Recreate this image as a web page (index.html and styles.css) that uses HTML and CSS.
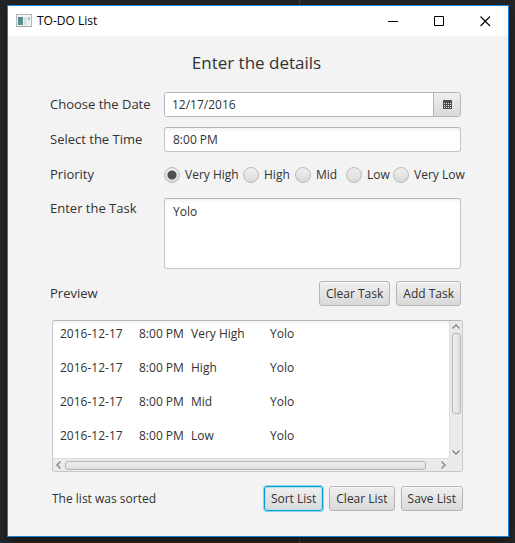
FILE: index.html
```html
<!DOCTYPE html>
<html lang="en">
<head>
<meta charset="utf-8">
<title>TO-DO List</title>
<link rel="stylesheet" href="styles.css">
</head>
<body>
<div class="window">
  <header class="titlebar">
    <svg class="app-icon" width="16" height="14" viewBox="0 0 16 14" aria-hidden="true">
      <defs>
        <linearGradient id="pane" x1="0" y1="0" x2="1" y2="1">
          <stop offset="0" stop-color="#5279a8"/><stop offset="1" stop-color="#54a468"/>
        </linearGradient>
      </defs>
      <rect x=".5" y=".5" width="15" height="12" fill="#f4f4f4" stroke="#b4b8bd"/>
      <path d="M0 12.5h16" stroke="#a2a6aa"/>
      <rect x="2" y="3" width="5" height="8" fill="url(#pane)"/>
      <rect x="8" y="3" width="3" height="8" fill="#dcdfe2"/>
      <rect x="12" y="3" width="2" height="3" fill="#9cc6bd"/>
      <rect x="12" y="6" width="2" height="5" fill="#e8e8ea"/>
    </svg>
    <span class="caption">TO-DO List</span>
    <button class="win-btn" aria-label="Minimize"><svg width="11" height="11"><path d="M0 5.500h10" stroke="#000"/></svg></button>
    <button class="win-btn" aria-label="Maximize"><svg width="11" height="11"><path d="M.5.500h9v9h-9z" fill="none" stroke="#000"/></svg></button>
    <button class="win-btn" aria-label="Close"><svg width="11" height="11"><path d="M.5.500l9.500 9.500M10 .5L.5 10" stroke="#000" stroke-width="1.100"/></svg></button>
  </header>

  <main class="content">
    <h1 class="heading">Enter the details</h1>

    <form class="form">
      <label class="label" for="date">Choose the Date</label>
      <div class="date-picker">
        <input class="field" id="date" type="text" value="12/17/2016">
        <button class="date-btn" type="button" aria-label="Open calendar">
          <svg width="9" height="9" viewBox="0 0 9 9" shape-rendering="crispEdges">
            <path fill="#4d4d4d" d="M0 0h9v9H0z"/>
            <path stroke="#e8e8e8" stroke-dasharray="1 1" d="M1 3.500h7M1 5.500h7M1 7.500h7"/>
          </svg>
        </button>
      </div>

      <label class="label" for="time">Select the Time</label>
      <input class="field" id="time" type="text" value="8:00 PM">

      <span class="label" id="priority">Priority</span>
      <div class="radios" role="radiogroup" aria-labelledby="priority">
        <label class="radio"><input type="radio" name="priority" checked>Very High</label>
        <label class="radio"><input type="radio" name="priority">High</label>
        <label class="radio"><input type="radio" name="priority">Mid</label>
        <label class="radio"><input type="radio" name="priority">Low</label>
        <label class="radio"><input type="radio" name="priority">Very Low</label>
      </div>

      <label class="label label-top" for="task">Enter the Task</label>
      <textarea class="field task" id="task">Yolo</textarea>

      <span class="label">Preview</span>
      <div class="actions">
        <button class="btn" type="button">Clear Task</button>
        <button class="btn" type="button">Add Task</button>
      </div>
    </form>

    <section class="preview">
      <div class="list">
        <table>
          <tr><td>2016-12-17</td><td>8:00 PM</td><td>Very High</td><td>Yolo</td></tr>
          <tr><td>2016-12-17</td><td>8:00 PM</td><td>High</td><td>Yolo</td></tr>
          <tr><td>2016-12-17</td><td>8:00 PM</td><td>Mid</td><td>Yolo</td></tr>
          <tr><td>2016-12-17</td><td>8:00 PM</td><td>Low</td><td>Yolo</td></tr>
        </table>
      </div>
      <div class="bar bar-v">
        <svg width="8" height="5" viewBox="0 0 8 5"><path d="M.5 4.500L4 1l3.500 3.500"/></svg>
        <div class="track"><div class="thumb"></div></div>
        <svg width="8" height="5" viewBox="0 0 8 5"><path d="M.5.500L4 4 7.500.5"/></svg>
      </div>
      <div class="bar bar-h">
        <svg width="5" height="8" viewBox="0 0 5 8"><path d="M4.500.5L1 4l3.500 3.500"/></svg>
        <div class="track"><div class="thumb"></div></div>
        <svg width="5" height="8" viewBox="0 0 5 8"><path d="M.5.500L4 4 .5 7.500"/></svg>
      </div>
      <div class="bar"></div>
    </section>

    <footer class="footer">
      <span class="status">The list was sorted</span>
      <button class="btn btn-focused" type="button">Sort List</button>
      <button class="btn" type="button">Clear List</button>
      <button class="btn" type="button">Save List</button>
    </footer>
  </main>
</div>
</body>
</html>
```
FILE: styles.css
```css
* { box-sizing: border-box; }

html { height: 100%; }

body {
  margin: 0;
  min-height: 100%;
  padding: 5px 6px 6px 7px;
  display: flex;
  background: linear-gradient(90deg, transparent 299px, #484848 299px, #484848 300px, transparent 300px), #262626;
  font: 12px/16px "Open Sans", "Noto Sans", sans-serif;
  color: #323232;
}

button, input, textarea { font: inherit; color: inherit; margin: 0; }

.window {
  flex: 1;
  min-width: 0;
  border: 1px solid #1883d7;
  background: #f3f3f3;
  box-shadow: 0 2px 8px #111;
}

.titlebar {
  display: flex;
  align-items: center;
  height: 30px;
  padding-left: 8px;
  background: #fff;
  color: #000;
}

.caption { flex: 1; margin-left: 5px; }

.win-btn {
  display: grid;
  place-items: center;
  width: 46px;
  height: 30px;
  padding: 0;
  border: 0;
  background: none;
}

.content { padding: 14px 45px 24px 42px; }

.heading {
  margin: 0 0 17px;
  font-size: 17px;
  line-height: 25px;
  font-weight: 400;
  text-align: center;
}

.form {
  display: grid;
  grid-template-columns: 114px minmax(0, 1fr);
  grid-template-rows: 25px 25px 26px 73px 25px;
  row-gap: 10px;
  margin-right: 2px;
  align-items: center;
}

.label { padding-bottom: 2px; font-size: 13px; white-space: nowrap; }
.label-top { align-self: start; margin-top: 2px; }

.field {
  width: 100%;
  height: 25px;
  padding: 0 8px;
  border: 1px solid #c4c4c4;
  border-top-color: #b5b5b5;
  border-radius: 3px;
  background: linear-gradient(#f2f2f2, #fff 4px);
  outline: 0;
}

.task { display: block; align-self: start; height: 71px; padding: 5px 8px; resize: none; }

.date-picker {
  display: flex;
  height: 25px;
  border: 1px solid #b5b5b5;
  border-radius: 3px;
  overflow: hidden;
}
.date-picker .field { flex: 1; min-width: 0; height: 23px; padding: 0 7px; border: 0; border-radius: 0; background: #fff; }

.date-btn {
  display: grid;
  place-items: center;
  width: 27px;
  padding: 0;
  border: 0;
  border-left: 1px solid #b5b5b5;
  background: linear-gradient(#efefef, #d9d9d9);
}

.radios { display: grid; grid-template-columns: 79px 52px 51px 47px auto; }
.radio { display: flex; align-items: center; gap: 5px; white-space: nowrap; }
.radio input {
  appearance: none;
  flex: none;
  width: 16px;
  height: 16px;
  border: 1px solid #b9b9b9;
  border-radius: 50%;
  background: linear-gradient(#efefef, #dadada);
}
.radio input:checked {
  background: radial-gradient(circle, #505050 4px, transparent 5px), linear-gradient(#efefef, #dadada);
}

.actions { display: flex; justify-content: flex-end; gap: 6px; }

.btn {
  height: 25px;
  padding: 0 6px;
  border: 1px solid #b5b5b5;
  border-radius: 3px;
  background: linear-gradient(#efefef, #d9d9d9);
  box-shadow: inset 0 1px #f8f8f8;
  white-space: nowrap;
}
.btn-focused { border-color: #039ed3; box-shadow: 0 0 0 1px #8fd5ed, inset 0 0 0 1px #b4e1f0; }

.preview {
  display: grid;
  grid-template-columns: minmax(0, 1fr) 13px;
  grid-template-rows: 137px 13px;
  margin: 14px 0 14px 2px;
  border: 1px solid #c8c8c8;
  border-top-color: #b5b5b5;
  border-radius: 3px;
  overflow: hidden;
}

.list { padding: 5px 7px 0; background: linear-gradient(#f2f2f2, #fff 4px); overflow: hidden; }
.list table { border-collapse: collapse; }
.list td { height: 34px; padding: 0; vertical-align: top; white-space: nowrap; }
.list td:nth-child(1), .list td:nth-child(3) { min-width: 79px; }
.list td:nth-child(2) { min-width: 52px; }

.bar { display: flex; align-items: center; background: #eaeaea; }
.bar svg { flex: none; fill: none; stroke: #868686; stroke-width: 1.4; }
.track { display: flex; flex: 1; }
.bar-v { flex-direction: column; padding: 3px 0; border-left: 1px solid #dedede; }
.bar-v .track { flex-direction: column; padding: 4px 0; }
.bar-h { padding: 0 3px; border-top: 1px solid #dedede; }
.bar-h .track { padding: 0 4px; }
.thumb { border: 1px solid #b5b5b5; border-radius: 3px; background: linear-gradient(#efefef, #dedede); }
.bar-v .thumb { width: 9px; height: 72%; background: linear-gradient(90deg, #efefef, #dedede); }
.bar-h .thumb { width: 97%; height: 9px; }

.footer { display: flex; align-items: center; gap: 6px; margin-left: 2px; }
.status { flex: 1; }
```
